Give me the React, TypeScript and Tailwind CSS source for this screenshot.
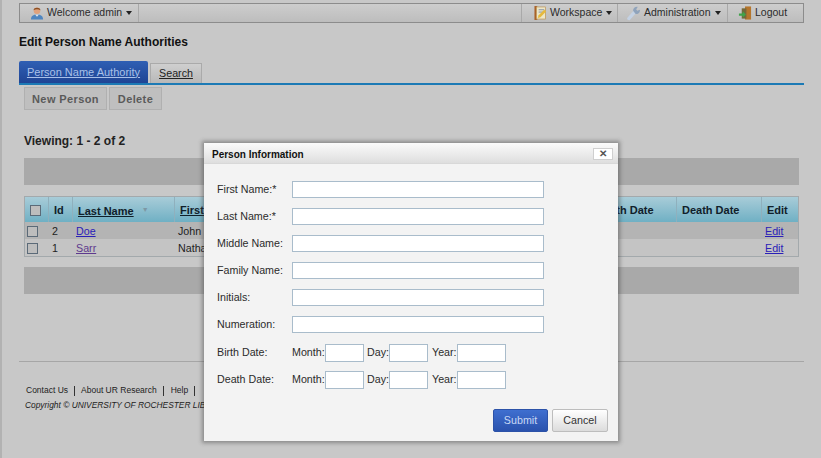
const sans = "font-['Liberation_Sans',Arial,sans-serif]";

function Caret() {
  return <span className="inline-block h-0 w-0 border-x-[3px] border-t-[4px] border-x-transparent border-t-[#222]" />;
}

function UserIcon() {
  return (
    <svg width="14" height="16" viewBox="0 0 15 16">
      <path d="M1 15c0-4 2.500-5.500 6.500-5.500S14 11 14 15z" fill="#4f86c0" />
      <path d="M5.500 9.500h4L7.500 12z" fill="#e8e8e8" />
      <circle cx="7.500" cy="5.500" r="3.500" fill="#e0a27c" />
      <path d="M3.800 5C3.800 1.500 11.200 1.500 11.200 5 9 3.800 6 3.800 3.800 5z" fill="#8a4f22" />
    </svg>
  );
}

function WorkspaceIcon() {
  return (
    <svg width="13" height="16" viewBox="0 0 14 17">
      <rect x="0.500" y="1" width="3" height="15" fill="#a9622a" />
      <rect x="2.500" y="2" width="10" height="13" fill="#ece6c8" stroke="#b98d4a" strokeWidth="0.7" />
      <path d="M5 5h6M5 7.500h5" stroke="#7d8fa6" />
      <path d="M4 14l1-3 6-6 2 2-6 6z" fill="#e6b93c" />
    </svg>
  );
}

function WrenchIcon() {
  return (
    <svg width="14" height="16" viewBox="0 0 15 16">
      <path d="M2 14l6.500-7.500" stroke="#c4d2e4" strokeWidth="3.500" strokeLinecap="round" />
      <path d="M6.500 5.500C6.500 3 9 1 11.500 1.500L9.800 4l1.200 1.500 2.800-1c.5 2.500-1.500 5-4.500 4.500z" fill="#8fa3bb" />
    </svg>
  );
}

function LogoutIcon() {
  return (
    <svg width="14" height="16" viewBox="0 0 15 16">
      <rect x="7.500" y="1" width="6.500" height="14" fill="#b5752c" />
      <rect x="4" y="3" width="5" height="11" fill="#74683a" />
      <path d="M1 8.500h4V6l3.500 3.500L5 13v-2H1z" fill="#3fa34a" />
    </svg>
  );
}

function Checkbox() {
  return <span className="block h-[11px] w-[11px] border border-[#5b6a78] bg-[#bdbdbd]" />;
}

function NavItem({ icon, label, caret, className }: { icon: React.ReactNode; label: string; caret?: boolean; className: string }) {
  return (
    <div className={`flex h-full items-center border-l border-[#a9a9a9] ${className}`}>
      {icon}
      <span className="ml-[3px] mr-[4px]">{label}</span>
      {caret && <Caret />}
    </div>
  );
}

function TextRow({ label }: { label: string }) {
  return (
    <div className="flex h-[27px] items-center">
      <label className="w-[75px] text-[#2b2b2b]">{label}</label>
      <input className="h-[17px] w-[252px] border border-[#a9bccb] bg-white" />
    </div>
  );
}

function DateRow({ label }: { label: string }) {
  return (
    <div className="flex h-[27px] items-center text-[#2b2b2b]">
      <label className="w-[75px]">{label}</label>
      <span className="w-[33px]">Month:</span>
      <input className="h-[18px] w-[39px] border border-[#a9bccb] bg-white" />
      <span className="ml-[3px] w-[22px]">Day:</span>
      <input className="h-[18px] w-[39px] border border-[#a9bccb] bg-white" />
      <span className="ml-[4px] w-[25px]">Year:</span>
      <input className="h-[18px] w-[49px] border border-[#a9bccb] bg-white" />
    </div>
  );
}

function Modal() {
  return (
    <div className="absolute left-[204px] top-[143px] h-[298px] w-[414px] bg-[#f3f3f3] text-[10.700px] shadow-[0_0_4px_2px_rgba(60,60,60,0.45)]">
      <div className="flex h-[21px] items-center justify-between border-b border-[#d8d8d8] bg-gradient-to-b from-[#fbfbfb] to-[#dedede] pl-[8px] pr-[5px] pt-[2px]">
        <span className="text-[10px] font-bold text-[#111]">Person Information</span>
        <button className="flex h-[12px] w-[20px] items-center justify-center border border-[#cfcfcf] bg-white text-[10px] font-bold leading-none text-[#555]">✕</button>
      </div>
      <div className="flex flex-col pl-[13px] pt-[12px]">
        <TextRow label="First Name:*" />
        <TextRow label="Last Name:*" />
        <TextRow label="Middle Name:" />
        <TextRow label="Family Name:" />
        <TextRow label="Initials:" />
        <TextRow label="Numeration:" />
        <div className="mt-[1px]">
          <DateRow label="Birth Date:" />
          <DateRow label="Death Date:" />
        </div>
      </div>
      <div className="mt-[16px] flex justify-end gap-[4px] pr-[10px]">
        <button className="h-[23px] w-[55px] rounded-[2px] border border-[#2c52a8] bg-gradient-to-b from-[#3f6fd0] to-[#2a52ad] text-[#c9d8f5]">Submit</button>
        <button className="h-[23px] w-[56px] rounded-[2px] border border-[#bdbdbd] bg-gradient-to-b from-white to-[#dcdcdc] text-[#333]">Cancel</button>
      </div>
    </div>
  );
}

function PersonTable() {
  const head = "flex items-center border-r border-[#8fb0bd] pl-[5px] pt-[2px] font-bold text-[#10202a]";
  const rows = [
    { id: "2", last: "Doe", first: "John", bg: "bg-[#b4b4b4]", lastColor: "text-[#2a20b8]" },
    { id: "1", last: "Sarr", first: "Nathan", bg: "bg-[#c4c4c4]", lastColor: "text-[#5e3a8e]" },
  ];
  const cols = "grid-cols-[24px_24px_102px_421px_81px_85px_1fr]";
  return (
    <div className="mt-[11px] border border-[#a3a9ac] text-[10.700px]">
      <div className={`grid h-[25px] ${cols} bg-gradient-to-b from-[#a8ccd8] to-[#6fb0c4] text-[11px]`}>
        <div className={`${head} pl-[4px]`}><Checkbox /></div>
        <div className={head}>Id</div>
        <div className={head}>
          <span className="pt-[2px] underline">Last Name</span>
          <span className="ml-[8px] text-[7px] text-[#7d98a4]">▼</span>
        </div>
        <div className={head}><span className="underline">First Name</span></div>
        <div className={head}>Birth Date</div>
        <div className={head}>Death Date</div>
        <div className="flex items-center pl-[5px] pt-[2px] font-bold text-[#10202a]">Edit</div>
      </div>
      {rows.map((r) => (
        <div key={r.id} className={`grid h-[17px] items-center pt-[1px] ${cols} ${r.bg} text-[#222]`}>
          <div className="pl-[2px]"><Checkbox /></div>
          <div className="pl-[3px]">{r.id}</div>
          <div className={`pl-[3px] underline ${r.lastColor}`}>{r.last}</div>
          <div className="pl-[3px]">{r.first}</div>
          <div />
          <div />
          <div className="pl-[3px] text-[#2a20b8] underline">Edit</div>
        </div>
      ))}
    </div>
  );
}

export default function App() {
  return (
    <div className={`relative h-[458px] w-[821px] overflow-hidden border-l-2 border-[#b2b2b2] bg-[#c8c8c8] ${sans}`}>
      <div className="pl-[17px] pr-[17px] pt-[3px]">
        {/* top bar */}
        <div className="flex h-[20px] items-center justify-between border border-[#8c8c8c] bg-gradient-to-b from-[#cdcdcd] to-[#bdbdbd] text-[10.500px] text-[#2b2b2b]">
          <div className="flex h-full w-[119px] items-center border-r border-[#a9a9a9] pl-[10px]">
            <UserIcon />
            <span className="ml-[3px] mr-[4px]">Welcome admin</span>
            <Caret />
          </div>
          <div className="flex h-full">
            <NavItem icon={<WorkspaceIcon />} label="Workspace" caret className="w-[96px] pl-[12px]" />
            <NavItem icon={<WrenchIcon />} label="Administration" caret className="w-[110px] pl-[9px]" />
            <NavItem icon={<LogoutIcon />} label="Logout" className="w-[76px] pl-[10px]" />
          </div>
        </div>

        <h1 className="mt-[12px] text-[12px] font-bold leading-[14px] text-[#111]">Edit Person Name Authorities</h1>

        {/* tabs */}
        <div className="mt-[12px] flex h-[22px] items-end gap-[2px] text-[10.700px]">
          <div className="flex h-[22px] w-[129px] items-center justify-center rounded-t-[2px] bg-gradient-to-b from-[#2f5fb4] to-[#1f4494] text-[11px] text-[#a9c0e8] underline">Person Name Authority</div>
          <div className="flex h-[20px] w-[52px] items-center justify-center border border-b-0 border-[#aaaaaa] bg-gradient-to-b from-[#cfcfcf] to-[#b8b8b8] pb-[1px] text-[#222] underline">Search</div>
        </div>
        <div className="h-[2px] bg-[#1c7ab5]" />

        <div className="pl-[5px] pr-[5px]">
          <div className="mt-[2px] flex gap-[2px] text-[11px] font-bold tracking-[0.4px] text-[#5a5a5a]">
            <div className="flex h-[23px] w-[83px] items-center justify-center border border-[#b0b0b0] bg-[#bfbfbf] pt-[2px]">New Person</div>
            <div className="flex h-[23px] w-[53px] items-center justify-center border border-[#b0b0b0] bg-[#bfbfbf] pt-[2px]">Delete</div>
          </div>

          <div className="mt-[23px] text-[12px] font-bold leading-[16px] text-[#222]">Viewing: 1 - 2 of 2</div>

          <div className="mt-[9px] h-[27px] bg-[#a9a9a9]" />
          <PersonTable />
          <div className="mt-[10px] h-[27px] bg-[#a9a9a9]" />
        </div>

        <div className="mt-[67px] h-px bg-[#a6a6a6]" />

        {/* footer */}
        <div className="mt-[23px] pl-[7px] text-[8.500px] text-[#222]">
          <div className="flex items-center gap-[6px] leading-[11px]">
            <span>Contact Us</span><span className="h-[10px] w-px bg-[#333]" />
            <span>About UR Research</span><span className="h-[10px] w-px bg-[#333]" />
            <span className="ml-[1px]">Help</span><span className="h-[10px] w-px bg-[#333]" />
          </div>
          <div className="-ml-[1px] mt-[4px] text-[8.400px] italic leading-[11px]">Copyright © UNIVERSITY OF ROCHESTER LIBRARIES</div>
        </div>
      </div>
      <div className="absolute inset-0 -left-[2px]">
        <Modal />
      </div>
    </div>
  );
}
